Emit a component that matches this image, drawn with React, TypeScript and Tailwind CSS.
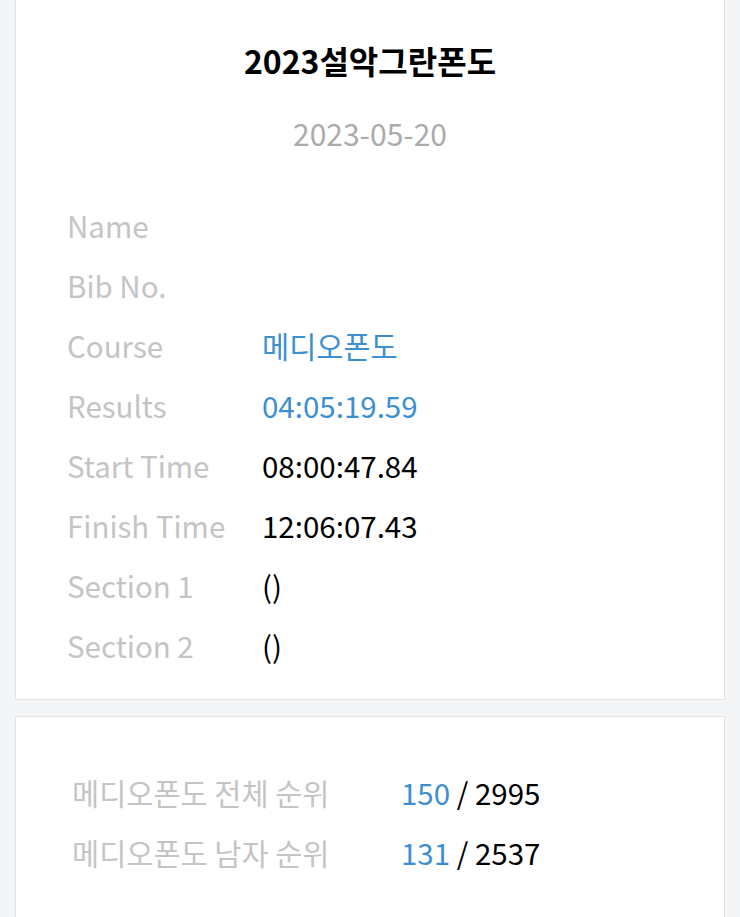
import React from "react";

const font = { fontFamily: '"Noto Sans CJK KR", "Noto Sans", sans-serif' };

function Row({ label, value, valueClass }: { label: string; value: string; valueClass: string }) {
  return (
    <div className="flex h-[60px] items-center">
      <div className="w-[195px] shrink-0 text-[#c4c4c4]">{label}</div>
      <div className={valueClass}>{value}</div>
    </div>
  );
}

export default function App() {
  return (
    <div className="min-h-[917px] w-[740px] bg-[#f4f5f7] px-[15px]" style={font}>
      <div className="border border-t-0 border-[#e1e3e6] bg-white pb-[24px]">
        <div className="pt-[38px] text-center text-[32px] font-bold leading-[44px] text-black">
          2023설악그란폰도
        </div>
        <div className="mt-[31px] text-center text-[30px] leading-[40px] text-[#ababab]">2023-05-20</div>
        <div className="mt-[42px] pl-[51px] text-[29.5px]">
          <Row label="Name" value="" valueClass="" />
          <Row label="Bib No." value="" valueClass="" />
          <Row label="Course" value="메디오폰도" valueClass="text-[#3d8fd2]" />
          <Row label="Results" value="04:05:19.59" valueClass="text-[#3d8fd2]" />
          <Row label="Start Time" value="08:00:47.84" valueClass="text-black" />
          <Row label="Finish Time" value="12:06:07.43" valueClass="text-black" />
          <Row label="Section 1" value="()" valueClass="text-black" />
          <Row label="Section 2" value="()" valueClass="text-black" />
        </div>
      </div>
      <div className="mt-[16px] border border-b-0 border-[#e1e3e6] bg-white pt-[45px] pb-[40px] pl-[56px] text-[29.5px]">
        <div className="flex h-[60px] items-center">
          <div className="w-[329px] shrink-0 text-[#c4c4c4]">메디오폰도 전체 순위</div>
          <div>
            <span className="text-[#3d8fd2]">150</span>
            <span className="text-black"> / 2995</span>
          </div>
        </div>
        <div className="flex h-[60px] items-center">
          <div className="w-[329px] shrink-0 text-[#c4c4c4]">메디오폰도 남자 순위</div>
          <div>
            <span className="text-[#3d8fd2]">131</span>
            <span className="text-black"> / 2537</span>
          </div>
        </div>
      </div>
    </div>
  );
}
